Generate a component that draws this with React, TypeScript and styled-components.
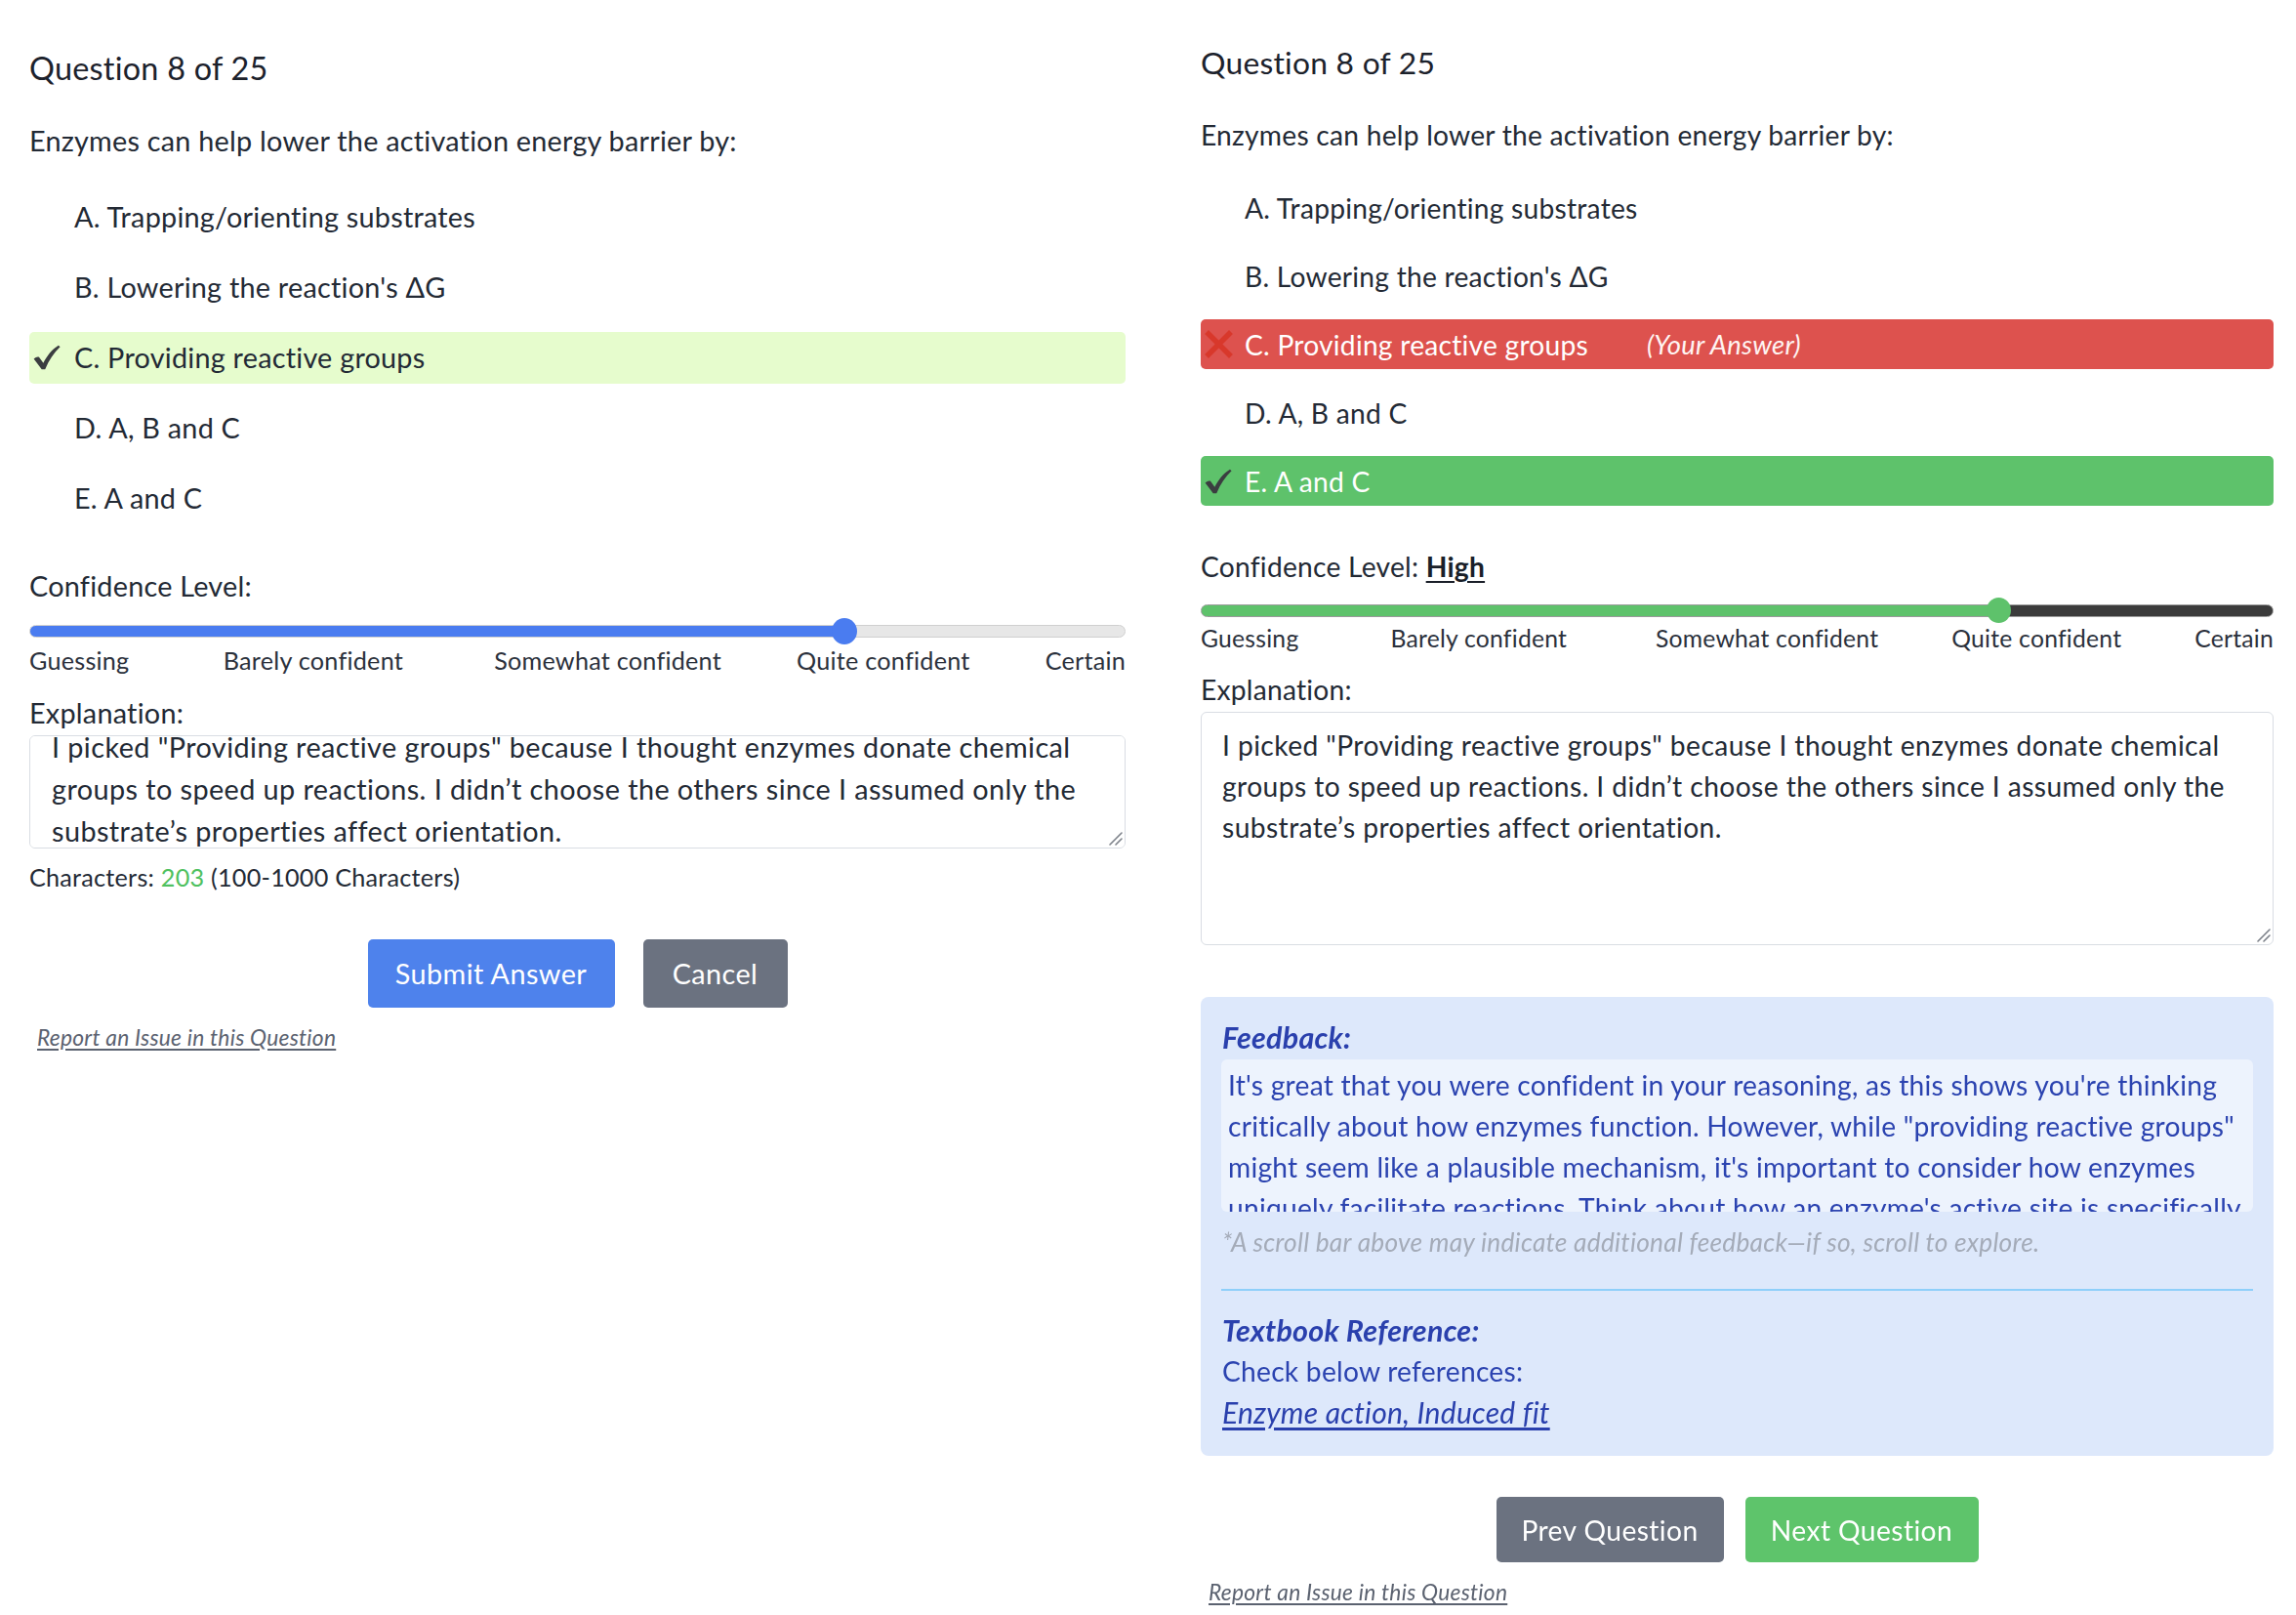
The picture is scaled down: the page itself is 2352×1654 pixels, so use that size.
import React, { useEffect, useRef } from "react";
import styled, { createGlobalStyle } from "styled-components";

const GlobalStyle = createGlobalStyle`
  html, body { margin: 0; padding: 0; background: #ffffff; }
  body {
    font-family: Lato, "Noto Sans", sans-serif;
    color: #232a35;
    letter-spacing: 0.015em;
  }
  *, *::before, *::after { box-sizing: border-box; }
`;

type Metrics = {
  w: number;
  top: number;
  headFs: number;
  headLh: number;
  qGap: number;
  fs: number;
  lh: number;
  optTop: number;
  rowH: number;
  rowGap: number;
  indent: number;
  confTop: number;
  sliderTop: number;
  thumb: number;
  track: number;
  labelFs: number;
  labelLh: number;
  labelsTop: number;
  explTop: number;
  taTop: number;
  taH: number;
  taLh: number;
  taPadT: number;
  taPadX: number;
};

const LEFT: Metrics = {
  w: 1123, top: 48.5, headFs: 32.4, headLh: 41, qGap: 34, fs: 28.8, lh: 41,
  optTop: 31, rowH: 53, rowGap: 19, indent: 46, confTop: 43, sliderTop: 12,
  thumb: 27, track: 13, labelFs: 25.2, labelLh: 31, labelsTop: 1, explTop: 18,
  taTop: 2.5, taH: 116, taLh: 43, taPadT: 12, taPadX: 22,
};

const RIGHT: Metrics = {
  w: 1099, top: 44, headFs: 31.8, headLh: 40, qGap: 34, fs: 28.2, lh: 40,
  optTop: 29, rowH: 51, rowGap: 19, indent: 45, confTop: 42, sliderTop: 12,
  thumb: 26, track: 13, labelFs: 24.7, labelLh: 30, labelsTop: 1, explTop: 17,
  taTop: 3, taH: 239, taLh: 42, taPadT: 11.5, taPadX: 21,
};

const Page = styled.main`
  display: flex;
  align-items: flex-start;
  gap: 77px;
  padding-left: 30px;
  min-height: 1654px;
`;

const Panel = styled.section<{ $m: Metrics }>`
  --fs: ${(p) => p.$m.fs}px;
  --lh: ${(p) => p.$m.lh}px;
  width: ${(p) => p.$m.w}px;
  flex: none;
  display: flex;
  flex-direction: column;
  padding-top: ${(p) => p.$m.top}px;
  font-size: var(--fs);
  line-height: var(--lh);
`;

const Heading = styled.h2<{ $m: Metrics }>`
  margin: 0;
  font-size: ${(p) => p.$m.headFs}px;
  line-height: ${(p) => p.$m.headLh}px;
  font-weight: 400;
  color: #1c222c;
`;

const Prompt = styled.p<{ $m: Metrics }>`
  margin: ${(p) => p.$m.qGap}px 0 0;
`;

const OptionList = styled.ul<{ $m: Metrics }>`
  list-style: none;
  margin: ${(p) => p.$m.optTop}px 0 0;
  padding: 0;
  display: flex;
  flex-direction: column;
  gap: ${(p) => p.$m.rowGap}px;
`;

type Tone = "plain" | "picked" | "wrong" | "right";

const toneBg: Record<Tone, string> = {
  plain: "transparent",
  picked: "#e6fccd",
  wrong: "#dd524e",
  right: "#5ec26b",
};

const OptionRow = styled.li<{ $m: Metrics; $tone: Tone }>`
  display: flex;
  align-items: center;
  height: ${(p) => p.$m.rowH}px;
  padding-left: 4px;
  border-radius: 5px;
  background: ${(p) => toneBg[p.$tone]};
  color: ${(p) => (p.$tone === "wrong" || p.$tone === "right" ? "#ffffff" : "#232a35")};
`;

const Mark = styled.span<{ $m: Metrics }>`
  flex: none;
  width: ${(p) => p.$m.indent - 4}px;
  display: flex;
  align-items: center;
`;

const YourAnswer = styled.em`
  margin-left: 60px;
  font-size: 0.97em;
  font-style: italic;
  color: #fff4f2;
`;

const ConfLabel = styled.div<{ $m: Metrics }>`
  margin-top: ${(p) => p.$m.confTop}px;
`;

const Level = styled.span`
  font-weight: 700;
  color: #1a1f29;
  text-decoration: underline;
  text-underline-offset: 4px;
`;

const Range = styled.input<{
  $m: Metrics;
  $fill: string;
  $rest: string;
  $edge: string;
  $pos: number;
}>`
  -webkit-appearance: none;
  appearance: none;
  display: block;
  width: 100%;
  height: ${(p) => p.$m.thumb}px;
  margin: ${(p) => p.$m.sliderTop}px 0 0;
  padding: 0;
  background: transparent;

  &::-webkit-slider-runnable-track {
    height: ${(p) => p.$m.track}px;
    border-radius: 999px;
    border: 1px solid ${(p) => p.$edge};
    background: linear-gradient(
      to right,
      ${(p) => p.$fill} 0,
      ${(p) => p.$fill} ${(p) => p.$pos}%,
      ${(p) => p.$rest} ${(p) => p.$pos}%,
      ${(p) => p.$rest} 100%
    );
  }
  &::-webkit-slider-thumb {
    -webkit-appearance: none;
    appearance: none;
    width: ${(p) => p.$m.thumb - 1}px;
    height: ${(p) => p.$m.thumb}px;
    border-radius: 50%;
    border: none;
    background: ${(p) => p.$fill};
    margin-top: ${(p) => (p.$m.track - 2 - p.$m.thumb) / 2}px;
  }
`;

const ScaleLabels = styled.div<{ $m: Metrics }>`
  display: grid;
  grid-template-columns: 17.7% 24.7% 27.6% 1fr auto;
  margin-top: ${(p) => p.$m.labelsTop}px;
  font-size: ${(p) => p.$m.labelFs}px;
  line-height: ${(p) => p.$m.labelLh}px;
  color: #2b313c;
  white-space: nowrap;
`;

const FieldLabel = styled.label<{ $m: Metrics }>`
  display: block;
  margin-top: ${(p) => p.$m.explTop}px;
`;

const FieldWrap = styled.div<{ $m: Metrics }>`
  position: relative;
  margin-top: ${(p) => p.$m.taTop}px;
`;

const Explanation = styled.textarea<{ $m: Metrics }>`
  display: block;
  width: 100%;
  height: ${(p) => p.$m.taH}px;
  padding: ${(p) => p.$m.taPadT}px ${(p) => p.$m.taPadX}px;
  border: 1px solid #d9dde3;
  border-radius: 6px;
  font: inherit;
  font-size: var(--fs);
  letter-spacing: 0.015em;
  line-height: ${(p) => p.$m.taLh}px;
  color: #232a35;
  background: #ffffff;
  resize: none;
  outline: none;
  scrollbar-width: none;
  &::-webkit-scrollbar { display: none; }
`;

const Grip = styled.svg`
  position: absolute;
  right: 3px;
  bottom: 3px;
  width: 16px;
  height: 16px;
  pointer-events: none;
`;

const CharCount = styled.div`
  margin-top: 13.5px;
  font-size: 25.2px;
  line-height: 31px;
  color: #232a35;
`;

const Count = styled.span`
  color: #4fc15f;
`;

const ButtonRow = styled.div<{ $top: number; $gap: number }>`
  display: flex;
  justify-content: center;
  gap: ${(p) => p.$gap}px;
  margin-top: ${(p) => p.$top}px;
`;

const ActionButton = styled.button<{ $bg: string; $h: number; $w: number }>`
  height: ${(p) => p.$h}px;
  width: ${(p) => p.$w}px;
  padding: 0;
  border: none;
  border-radius: 5px;
  background: ${(p) => p.$bg};
  color: #ffffff;
  font: inherit;
  font-size: var(--fs);
  letter-spacing: 0.015em;
  cursor: pointer;
`;

const ReportLink = styled.a<{ $top: number }>`
  align-self: flex-start;
  margin-top: ${(p) => p.$top}px;
  margin-left: 8px;
  font-size: 22.8px;
  line-height: 30px;
  font-style: italic;
  color: #5b6270;
  text-decoration: underline;
  text-underline-offset: 3px;
`;

const FeedbackBox = styled.div`
  margin-top: 53px;
  padding: 23px 21px 23px 21px;
  border-radius: 8px;
  background: #dde8fb;
  color: #2b43b0;
`;

const FeedbackTitle = styled.div`
  padding-left: 1px;
  font-size: 1.08em;
  line-height: 36px;
  font-weight: 700;
  font-style: italic;
  color: #2a40ad;
`;

const FeedbackScroll = styled.div`
  margin-top: 5px;
  height: 156px;
  padding: 5px 7px;
  border-radius: 6px;
  background: #edf3fd;
  line-height: 42px;
  overflow-y: auto;
  scrollbar-width: none;
  &::-webkit-scrollbar { display: none; }
`;

const FeedbackNote = styled.div`
  margin-top: 13px;
  padding-left: 1px;
  font-size: 26.3px;
  line-height: 36px;
  font-style: italic;
  color: #a4abb8;
`;

const Divider = styled.hr`
  margin: 30px 0 0;
  border: none;
  height: 2px;
  background: #8ecffa;
`;

const RefBlock = styled.div`
  margin-top: 19px;
  padding-left: 1px;
  line-height: 42px;
`;

const RefTitle = styled.div`
  font-size: 1.08em;
  font-weight: 700;
  font-style: italic;
  color: #2a40ad;
`;

const RefLink = styled.a`
  display: inline-block;
  font-size: 1.067em;
  font-style: italic;
  color: #2a40ad;
  text-decoration: underline;
  text-underline-offset: 4px;
`;

const CheckIcon = () => (
  <svg width="28" height="26" viewBox="0 0 27 25" aria-hidden="true">
    <path
      d="M0.6 14 C2.4 12.2 4.4 11.6 5.8 12.2 L10 18 C13.6 11 18.4 4.6 25 0.6 L26.6 2.2 C20.6 7.8 15.4 15.4 11.8 24.2 L8.4 24.4 Z"
      fill="#3b3d40"
    />
  </svg>
);

const CrossIcon = () => (
  <svg width="29" height="29" viewBox="0 0 29 29" aria-hidden="true">
    <path d="M4 4 L25 25 M25 4 L4 25" stroke="#d8382b" strokeWidth="5.5" strokeLinecap="square" />
  </svg>
);

const ResizeGrip = () => (
  <Grip viewBox="0 0 16 16" aria-hidden="true">
    <path d="M15 3 L3 15 M15 9 L9 15" stroke="#7d828a" strokeWidth="1.6" strokeLinecap="round" />
  </Grip>
);

const OPTIONS = [
  "A. Trapping/orienting substrates",
  "B. Lowering the reaction's ΔG",
  "C. Providing reactive groups",
  "D. A, B and C",
  "E. A and C",
];

const SCALE = ["Guessing", "Barely confident", "Somewhat confident", "Quite confident", "Certain"];

const ANSWER =
  "I picked \"Providing reactive groups\" because I thought enzymes donate chemical groups to speed up reactions. I didn\u2019t choose the others since I assumed only the substrate\u2019s properties affect orientation.";

const FEEDBACK =
  "It's great that you were confident in your reasoning, as this shows you're thinking critically about how enzymes function. However, while \"providing reactive groups\" might seem like a plausible mechanism, it's important to consider how enzymes uniquely facilitate reactions. Think about how an enzyme's active site is specifically shaped to bind and orient substrates, and how this positioning lowers the activation energy without changing the overall ΔG of the reaction.";

const thumbPos = (m: Metrics, frac: number) =>
  ((frac * (m.w - m.thumb) + m.thumb / 2) / m.w) * 100;

function Scale({ m }: { m: Metrics }) {
  return (
    <ScaleLabels $m={m}>
      {SCALE.map((s) => (
        <span key={s}>{s}</span>
      ))}
    </ScaleLabels>
  );
}

function AnswerPanel() {
  const m = LEFT;
  const ref = useRef<HTMLTextAreaElement>(null);
  useEffect(() => {
    if (ref.current) ref.current.scrollTop = 22;
  }, []);
  return (
    <Panel $m={m}>
      <Heading $m={m}>Question 8 of 25</Heading>
      <Prompt $m={m}>Enzymes can help lower the activation energy barrier by:</Prompt>
      <OptionList $m={m}>
        {OPTIONS.map((o, i) => (
          <OptionRow key={o} $m={m} $tone={i === 2 ? "picked" : "plain"}>
            <Mark $m={m}>{i === 2 && <CheckIcon />}</Mark>
            <span>{o}</span>
          </OptionRow>
        ))}
      </OptionList>
      <ConfLabel $m={m}>Confidence Level:</ConfLabel>
      <Range
        type="range"
        min={0}
        max={4}
        step={1}
        defaultValue={3}
        $m={m}
        $fill="#4a7cf0"
        $rest="#e7e7e7"
        $edge="#cfcfcf"
        $pos={thumbPos(m, 0.75)}
      />
      <Scale m={m} />
      <FieldLabel $m={m}>Explanation:</FieldLabel>
      <FieldWrap $m={m}>
        <Explanation ref={ref} $m={m} defaultValue={ANSWER} />
        <ResizeGrip />
      </FieldWrap>
      <CharCount>
        Characters: <Count>203</Count> (100-1000 Characters)
      </CharCount>
      <ButtonRow $top={48.5} $gap={29}>
        <ActionButton $bg="#4e82ec" $h={70} $w={253}>Submit Answer</ActionButton>
        <ActionButton $bg="#6b7280" $h={70} $w={148}>Cancel</ActionButton>
      </ButtonRow>
      <ReportLink $top={14.5} href="#report">Report an Issue in this Question</ReportLink>
    </Panel>
  );
}

function ReviewPanel() {
  const m = RIGHT;
  return (
    <Panel $m={m}>
      <Heading $m={m}>Question 8 of 25</Heading>
      <Prompt $m={m}>Enzymes can help lower the activation energy barrier by:</Prompt>
      <OptionList $m={m}>
        {OPTIONS.map((o, i) => {
          const tone: Tone = i === 2 ? "wrong" : i === 4 ? "right" : "plain";
          return (
            <OptionRow key={o} $m={m} $tone={tone}>
              <Mark $m={m}>
                {tone === "wrong" && <CrossIcon />}
                {tone === "right" && <CheckIcon />}
              </Mark>
              <span>{o}</span>
              {tone === "wrong" && <YourAnswer>(Your Answer)</YourAnswer>}
            </OptionRow>
          );
        })}
      </OptionList>
      <ConfLabel $m={m}>
        Confidence Level: <Level>High</Level>
      </ConfLabel>
      <Range
        type="range"
        min={0}
        max={4}
        step={1}
        defaultValue={3}
        $m={m}
        $fill="#5ec26b"
        $rest="#3b3b3b"
        $edge="#9a9a9a"
        $pos={thumbPos(m, 0.75)}
      />
      <Scale m={m} />
      <FieldLabel $m={m}>Explanation:</FieldLabel>
      <FieldWrap $m={m}>
        <Explanation $m={m} defaultValue={ANSWER} />
        <ResizeGrip />
      </FieldWrap>
      <FeedbackBox>
        <FeedbackTitle>Feedback:</FeedbackTitle>
        <FeedbackScroll>{FEEDBACK}</FeedbackScroll>
        <FeedbackNote>
          *A scroll bar above may indicate additional feedback—if so, scroll to explore.
        </FeedbackNote>
        <Divider />
        <RefBlock>
          <RefTitle>Textbook Reference:</RefTitle>
          <div>Check below references:</div>
          <RefLink href="#ref">Enzyme action, Induced fit</RefLink>
        </RefBlock>
      </FeedbackBox>
      <ButtonRow $top={42} $gap={22}>
        <ActionButton $bg="#6b7280" $h={67} $w={233}>Prev Question</ActionButton>
        <ActionButton $bg="#5ec46b" $h={67} $w={239}>Next Question</ActionButton>
      </ButtonRow>
      <ReportLink $top={15} href="#report">Report an Issue in this Question</ReportLink>
    </Panel>
  );
}

export default function App() {
  return (
    <>
      <GlobalStyle />
      <Page>
        <AnswerPanel />
        <ReviewPanel />
      </Page>
    </>
  );
}
